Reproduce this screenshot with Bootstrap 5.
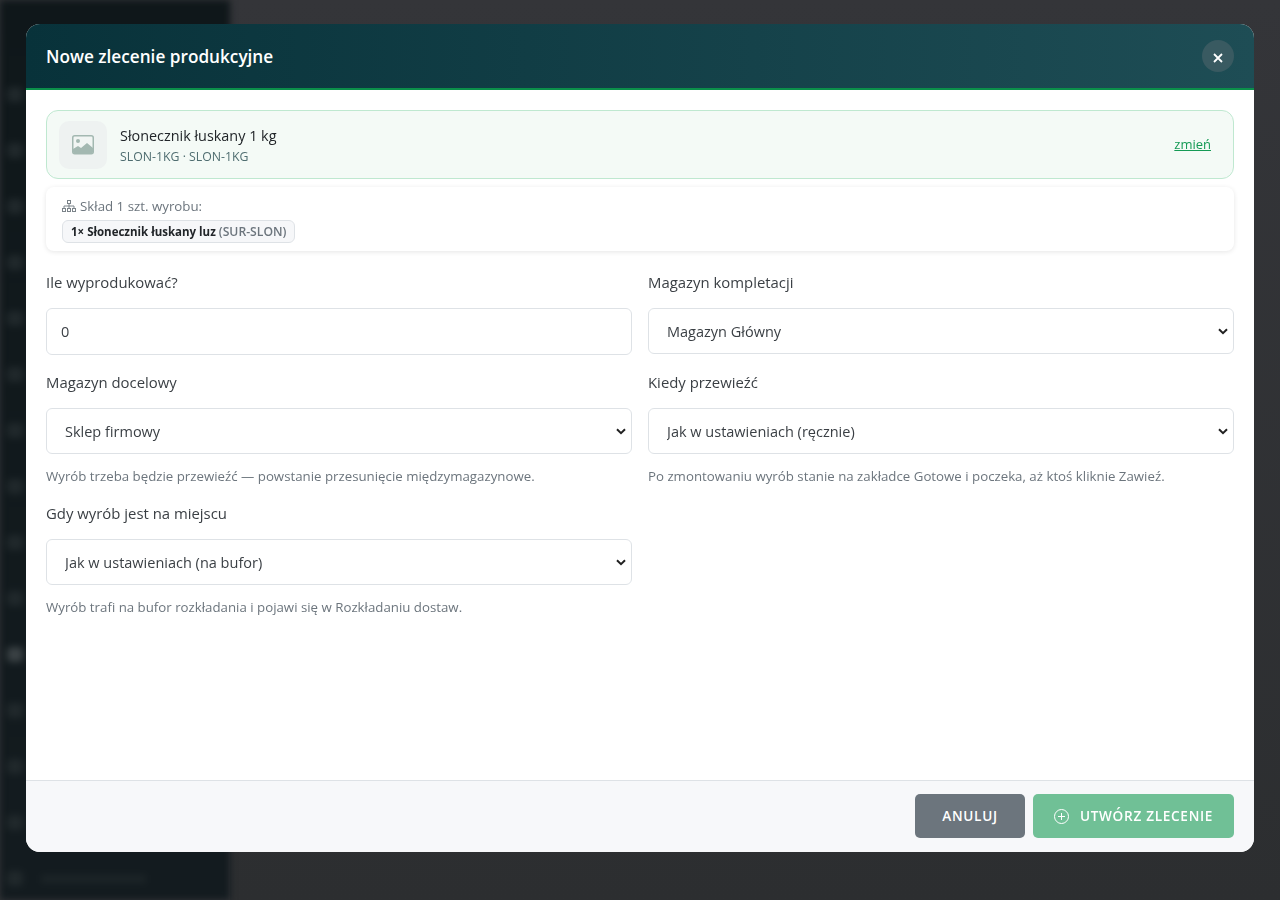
<!DOCTYPE html>
<html lang="pl">
<head>
  <meta charset="UTF-8" />
  <meta name="viewport" content="width=device-width, initial-scale=1.0"/>
  <title>Nowe zlecenie produkcyjne</title>
  <link href="https://cdn.jsdelivr.net/npm/bootstrap@5.3.3/dist/css/bootstrap.min.css" rel="stylesheet">
  <style>
    body {
      font-family: "Open Sans", "Noto Sans", sans-serif;
      background: #333438;
      height: 900px;
      overflow: hidden;
    }

    /* page behind the dialog */
    .app-shell { height: 900px; }
    .app-side {
      width: 230px;
      background: linear-gradient(180deg, #0f171a, #131b1f);
      padding: 87px 0 0 7px;
      gap: 41px;
      filter: blur(3.5px);
    }
    .side-item { height: 15px; gap: 18px; }
    .side-dot { width: 16px; height: 15px; border-radius: 4px; background: #20282b; }
    .side-dot-on { background: #3a4144; }
    .side-text { width: 105px; height: 8px; background: #1c2427; }
    .app-main { background: linear-gradient(180deg, #343539, #2c2e30); }

    /* dialog */
    .prod-dialog { max-width: 1228px; height: 828px; margin: 24px auto; }
    .prod-dialog .modal-content { height: 100%; border: 0; border-radius: 14px; overflow: hidden; }
    .prod-head {
      height: 66px;
      padding: 0 20px;
      background: linear-gradient(90deg, #08323a, #1e4d55);
      border-bottom: 2px solid #0b8f4a;
      border-radius: 0;
    }
    .prod-title { font-size: 17.2px; font-weight: 600; color: #fff; margin-top: 2px; }
    .prod-close {
      width: 32px; height: 32px;
      border-radius: 50%;
      background: #395a61;
      color: #fff;
    }
    .prod-close svg { margin-top: 4px; }
    .prod-body { padding: 20px 20px 0; }

    .picked {
      height: 69px;
      padding: 0 22px 0 12px;
      gap: 13px;
      background: #f4faf6;
      border: 1px solid #bfe8d0;
      border-radius: 12px;
    }
    .picked-thumb { width: 48px; height: 48px; border-radius: 10px; background: #eef2f1; }
    .picked-name { font-size: 14.4px; font-weight: 500; color: #212529; line-height: 20px; margin-top: 1px; }
    .picked-sku { font-size: 12.3px; color: #4f6d70; line-height: 17px; margin-top: 2px; }
    .picked-link { font-size: 13px; color: #159a55; }

    .bom {
      margin-top: 8px;
      height: 64px;
      padding: 10px 16px 0;
      border-radius: 8px;
      box-shadow: 0 1px 5px rgba(0, 0, 0, .1);
    }
    .bom-title { font-size: 13.3px; color: #6c757d; line-height: 18px; }
    .bom-chip {
      margin-top: 5px;
      height: 23px;
      padding: 0 8px;
      font-size: 11.5px;
      font-weight: 700;
      color: #212529;
      background: #f6f7f9;
      border: 1px solid #dee2e6;
      border-radius: 6px;
      line-height: 21px;
    }
    .bom-chip span { color: #6c757d; font-weight: 600; font-size: 12.2px; }

    .prod-form { margin-top: 20px; }
    .fld-label { font-size: 14.9px; font-weight: 500; color: #3a3f44; line-height: 21px; margin-bottom: 15px; margin-top: 1px; }
    .prod-form .form-control, .prod-form .form-select {
      height: 46px;
      font-size: 14.5px;
      color: #3a3f44;
      border-color: #dee2e6;
      border-radius: 6px;
    }
    .prod-form .form-control { height: 47px; padding-left: 14px; }
    .prod-form .form-select {
      padding: 7px 36px 5px 18px;
      background-image: url("data:image/svg+xml,%3csvg xmlns='http://www.w3.org/2000/svg' viewBox='0 0 10 7'%3e%3cpath fill='none' stroke='%23222' stroke-width='2' d='M1 1.2l4 4 4-4'/%3e%3c/svg%3e");
      background-position: right 5px center;
      background-size: 10px 7px;
    }
    .fld-help { font-size: 13.27px; color: #6c757d; line-height: 18px; margin-top: 13px; }
    .fld-wrap-a { height: 100px; }
    .fld-wrap-b { height: 131px; }

    .prod-foot {
      height: 72px;
      padding: 0 20px 2px;
      gap: 8px;
      background: #f7f8fa;
      border-top: 1px solid #dee2e6;
    }
    .prod-btn {
      height: 44px;
      padding: 2px 0 0;
      font-size: 13.6px;
      font-weight: 600;
      letter-spacing: .7px;
      text-transform: uppercase;
      border-radius: 5px;
      border: 0;
      color: #fff;
    }
    .prod-cancel { width: 110px; background: #6c757d; }
    .prod-submit { width: 201px; background: #70c096; gap: 11px; }
  </style>
</head>
<body>

<div class="app-shell d-flex">
  <div class="app-side d-flex flex-column">
    <div class="side-item d-flex"><div class="side-dot"></div></div>
    <div class="side-item d-flex"><div class="side-dot"></div></div>
    <div class="side-item d-flex"><div class="side-dot"></div></div>
    <div class="side-item d-flex"><div class="side-dot"></div></div>
    <div class="side-item d-flex"><div class="side-dot"></div></div>
    <div class="side-item d-flex"><div class="side-dot"></div></div>
    <div class="side-item d-flex"><div class="side-dot"></div></div>
    <div class="side-item d-flex"><div class="side-dot"></div></div>
    <div class="side-item d-flex"><div class="side-dot"></div></div>
    <div class="side-item d-flex"><div class="side-dot"></div></div>
    <div class="side-item d-flex"><div class="side-dot side-dot-on"></div></div>
    <div class="side-item d-flex"><div class="side-dot"></div></div>
    <div class="side-item d-flex"><div class="side-dot"></div></div>
    <div class="side-item d-flex"><div class="side-dot"></div></div>
    <div class="side-item d-flex align-items-center"><div class="side-dot"></div><div class="side-text"></div></div>
  </div>
  <div class="app-main flex-grow-1"></div>
</div>

<div class="modal d-block" tabindex="-1">
  <div class="modal-dialog prod-dialog">
    <div class="modal-content">
      <div class="modal-header prod-head d-flex justify-content-between align-items-center">
        <h5 class="prod-title mb-0">Nowe zlecenie produkcyjne</h5>
        <button type="button" class="prod-close btn p-0 d-flex align-items-center justify-content-center" aria-label="Zamknij">
          <svg width="10" height="10" viewBox="0 0 10 10"><path d="M1 1l8 8M9 1l-8 8" stroke="#fff" stroke-width="1.8" fill="none"/></svg>
        </button>
      </div>

      <div class="modal-body prod-body">
        <div class="picked d-flex align-items-center">
          <div class="picked-thumb d-flex align-items-center justify-content-center">
            <svg width="22" height="20" viewBox="0 0 22 20">
              <rect x="0.75" y="0.75" width="20.5" height="18" rx="2" fill="#f1f5f3" stroke="#a3b8b1" stroke-width="1.5"/>
              <circle cx="6" cy="6" r="2" fill="#a3b8b1"/>
              <path d="M1 17v-3l5-3 3 2 6-5 6 5v4a1 1 0 0 1-1 1H2a1 1 0 0 1-1-1z" fill="#a3b8b1"/>
            </svg>
          </div>
          <div class="flex-grow-1">
            <div class="picked-name">Słonecznik łuskany 1 kg</div>
            <div class="picked-sku">SLON-1KG · SLON-1KG</div>
          </div>
          <a href="#" class="picked-link">zmień</a>
        </div>

        <div class="bom">
          <div class="bom-title d-flex align-items-center gap-1">
            <svg width="14" height="12" viewBox="0 0 14 12" fill="none" stroke="#7b8389" stroke-width="1">
              <rect x="5.5" y="0.5" width="3" height="3"/>
              <rect x="0.5" y="8.5" width="3" height="3"/>
              <rect x="5.5" y="8.5" width="3" height="3"/>
              <rect x="10.5" y="8.5" width="3" height="3"/>
              <path d="M7 3.5v5M2 8.5V6h10v2.5"/>
            </svg>
            Skład 1 szt. wyrobu:
          </div>
          <div class="bom-chip d-inline-block">1× Słonecznik łuskany luz <span>(SUR-SLON)</span></div>
        </div>

        <div class="row prod-form gx-3">
          <div class="col-6 fld-wrap-a">
            <label class="fld-label d-block" for="qty">Ile wyprodukować?</label>
            <input id="qty" type="text" class="form-control" value="0">
          </div>
          <div class="col-6 fld-wrap-a">
            <label class="fld-label d-block" for="wh1">Magazyn kompletacji</label>
            <select id="wh1" class="form-select"><option>Magazyn Główny</option></select>
          </div>
          <div class="col-6 fld-wrap-b">
            <label class="fld-label d-block" for="wh2">Magazyn docelowy</label>
            <select id="wh2" class="form-select"><option>Sklep firmowy</option></select>
            <div class="fld-help">Wyrób trzeba będzie przewieźć — powstanie przesunięcie międzymagazynowe.</div>
          </div>
          <div class="col-6 fld-wrap-b">
            <label class="fld-label d-block" for="when">Kiedy przewieźć</label>
            <select id="when" class="form-select"><option>Jak w ustawieniach (ręcznie)</option></select>
            <div class="fld-help">Po zmontowaniu wyrób stanie na zakładce Gotowe i poczeka, aż ktoś kliknie Zawieź.</div>
          </div>
          <div class="col-6">
            <label class="fld-label d-block" for="arrive">Gdy wyrób jest na miejscu</label>
            <select id="arrive" class="form-select"><option>Jak w ustawieniach (na bufor)</option></select>
            <div class="fld-help">Wyrób trafi na bufor rozkładania i pojawi się w Rozkładaniu dostaw.</div>
          </div>
        </div>
      </div>

      <div class="prod-foot d-flex justify-content-end align-items-center">
        <button type="button" class="btn prod-btn prod-cancel">Anuluj</button>
        <button type="button" class="btn prod-btn prod-submit d-flex align-items-center justify-content-center">
          <svg width="15" height="15" viewBox="0 0 15 15" fill="none" stroke="#fff" stroke-width="1">
            <circle cx="7.5" cy="7.5" r="7"/><path d="M7.5 4v7M4 7.5h7"/>
          </svg>
          Utwórz zlecenie
        </button>
      </div>
    </div>
  </div>
</div>

</body>
</html>
